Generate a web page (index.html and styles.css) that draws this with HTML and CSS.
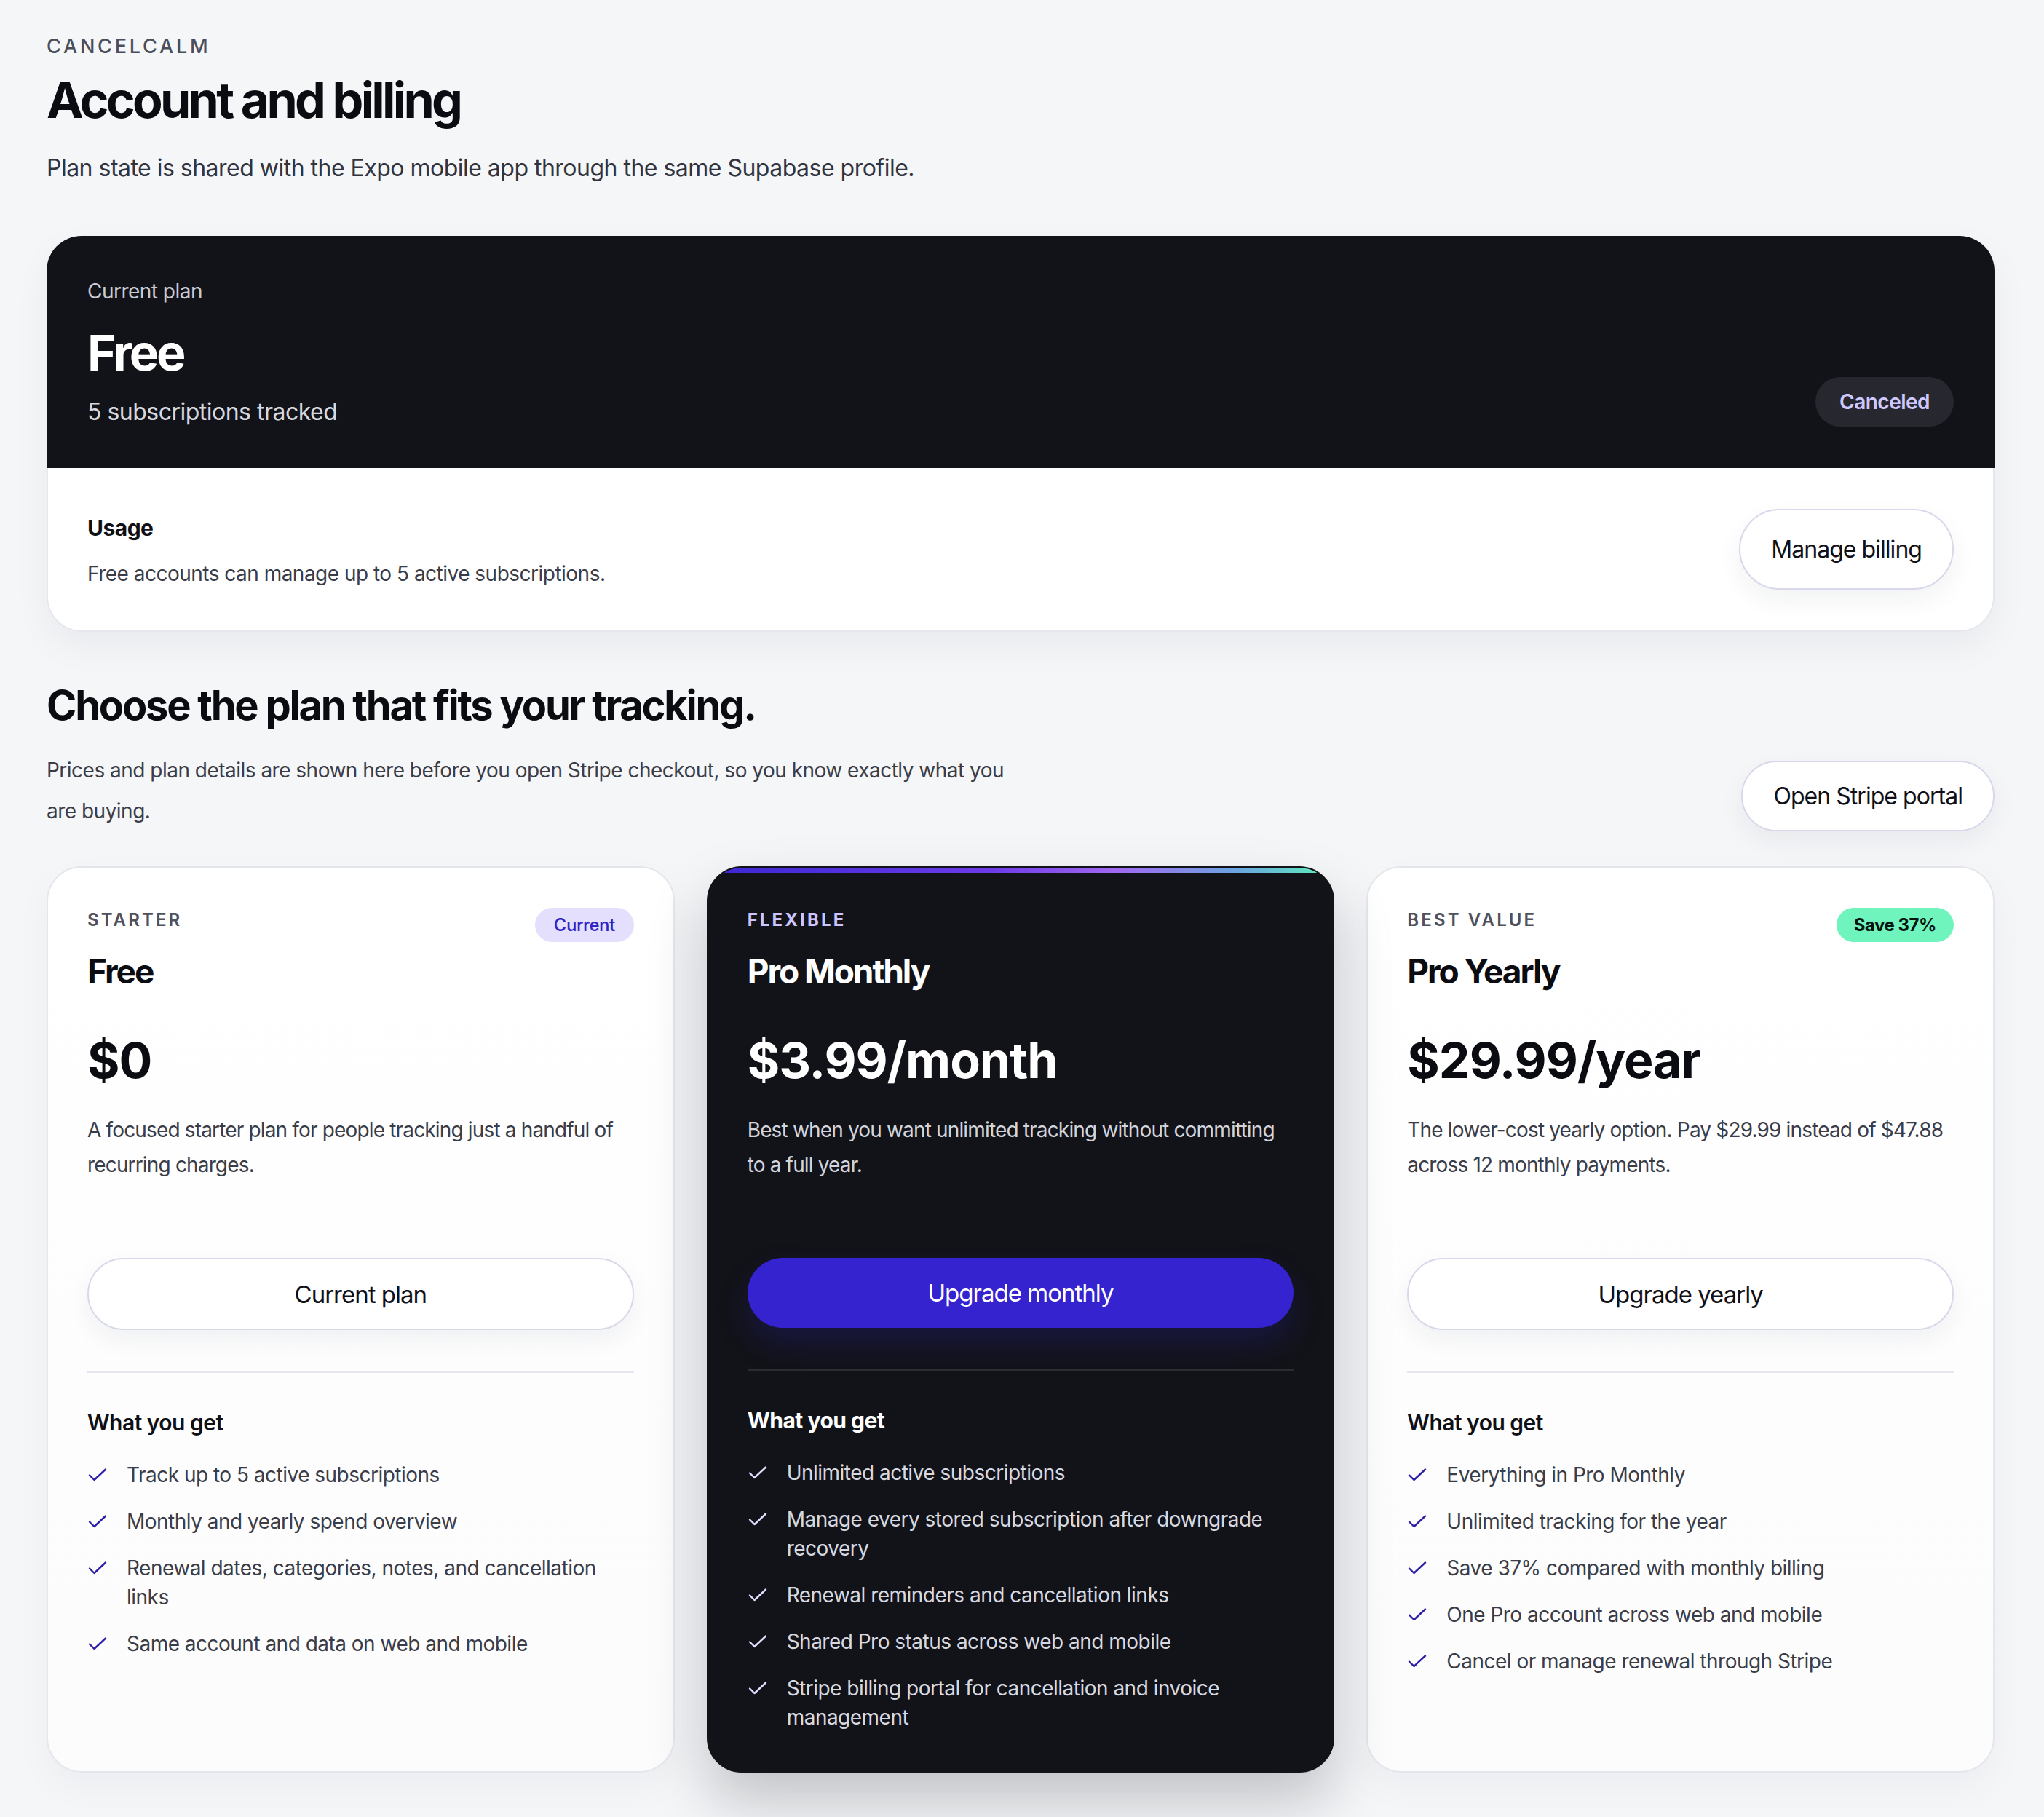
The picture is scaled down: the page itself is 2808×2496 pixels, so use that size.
FILE: index.html
```html
<!DOCTYPE html>
<html lang="en">
<head>
<meta charset="utf-8">
<title>Account and billing · CancelCalm</title>
<link rel="stylesheet" href="styles.css">
</head>
<body>
<main class="page">
  <header class="page-head">
    <p class="eyebrow">CANCELCALM</p>
    <h1 class="page-title">Account and billing</h1>
    <p class="lede">Plan state is shared with the Expo mobile app through the same Supabase profile.</p>
  </header>

  <section class="current">
    <div class="current-top">
      <div class="current-info">
        <p class="current-label">Current plan</p>
        <p class="current-name">Free</p>
        <p class="current-count">5 subscriptions tracked</p>
      </div>
      <span class="status-pill">Canceled</span>
    </div>
    <div class="usage">
      <div class="usage-text">
        <h3 class="usage-title">Usage</h3>
        <p class="usage-desc">Free accounts can manage up to 5 active subscriptions.</p>
      </div>
      <button class="btn btn-outline btn-manage">Manage billing</button>
    </div>
  </section>

  <section class="plans-head">
    <div class="plans-intro">
      <h2 class="plans-title">Choose the plan that fits your tracking.</h2>
      <p class="plans-desc">Prices and plan details are shown here before you open Stripe checkout, so you know exactly what you are buying.</p>
    </div>
    <button class="btn btn-outline btn-portal">Open Stripe portal</button>
  </section>

  <section class="plans">
    <article class="plan">
      <div class="plan-head">
        <span class="plan-eyebrow">STARTER</span>
        <span class="badge badge-current">Current</span>
      </div>
      <h3 class="plan-title">Free</h3>
      <p class="plan-price">$0</p>
      <p class="plan-desc">A focused starter plan for people tracking just a handful of recurring charges.</p>
      <button class="btn btn-outline btn-plan">Current plan</button>
      <hr class="divider">
      <h4 class="get-title">What you get</h4>
      <ul class="features">
        <li><svg class="check" viewBox="0 0 28 20" aria-hidden="true"><path d="M3 10.5 L9.5 17 L25 2.5"/></svg><span>Track up to 5 active subscriptions</span></li>
        <li><svg class="check" viewBox="0 0 28 20" aria-hidden="true"><path d="M3 10.5 L9.5 17 L25 2.5"/></svg><span>Monthly and yearly spend overview</span></li>
        <li><svg class="check" viewBox="0 0 28 20" aria-hidden="true"><path d="M3 10.5 L9.5 17 L25 2.5"/></svg><span>Renewal dates, categories, notes, and cancellation links</span></li>
        <li><svg class="check" viewBox="0 0 28 20" aria-hidden="true"><path d="M3 10.5 L9.5 17 L25 2.5"/></svg><span>Same account and data on web and mobile</span></li>
      </ul>
    </article>

    <article class="plan plan-dark">
      <div class="plan-head">
        <span class="plan-eyebrow">FLEXIBLE</span>
      </div>
      <h3 class="plan-title">Pro Monthly</h3>
      <p class="plan-price">$3.99/month</p>
      <p class="plan-desc">Best when you want unlimited tracking without committing to a full year.</p>
      <button class="btn btn-primary btn-plan">Upgrade monthly</button>
      <hr class="divider">
      <h4 class="get-title">What you get</h4>
      <ul class="features">
        <li><svg class="check" viewBox="0 0 28 20" aria-hidden="true"><path d="M3 10.5 L9.5 17 L25 2.5"/></svg><span>Unlimited active subscriptions</span></li>
        <li><svg class="check" viewBox="0 0 28 20" aria-hidden="true"><path d="M3 10.5 L9.5 17 L25 2.5"/></svg><span>Manage every stored subscription after downgrade recovery</span></li>
        <li><svg class="check" viewBox="0 0 28 20" aria-hidden="true"><path d="M3 10.5 L9.5 17 L25 2.5"/></svg><span>Renewal reminders and cancellation links</span></li>
        <li><svg class="check" viewBox="0 0 28 20" aria-hidden="true"><path d="M3 10.5 L9.5 17 L25 2.5"/></svg><span>Shared Pro status across web and mobile</span></li>
        <li><svg class="check" viewBox="0 0 28 20" aria-hidden="true"><path d="M3 10.5 L9.5 17 L25 2.5"/></svg><span>Stripe billing portal for cancellation and invoice management</span></li>
      </ul>
    </article>

    <article class="plan">
      <div class="plan-head">
        <span class="plan-eyebrow">BEST VALUE</span>
        <span class="badge badge-save">Save 37%</span>
      </div>
      <h3 class="plan-title">Pro Yearly</h3>
      <p class="plan-price">$29.99/year</p>
      <p class="plan-desc">The lower-cost yearly option. Pay $29.99 instead of $47.88 across 12 monthly payments.</p>
      <button class="btn btn-outline btn-plan">Upgrade yearly</button>
      <hr class="divider">
      <h4 class="get-title">What you get</h4>
      <ul class="features">
        <li><svg class="check" viewBox="0 0 28 20" aria-hidden="true"><path d="M3 10.5 L9.5 17 L25 2.5"/></svg><span>Everything in Pro Monthly</span></li>
        <li><svg class="check" viewBox="0 0 28 20" aria-hidden="true"><path d="M3 10.5 L9.5 17 L25 2.5"/></svg><span>Unlimited tracking for the year</span></li>
        <li><svg class="check" viewBox="0 0 28 20" aria-hidden="true"><path d="M3 10.5 L9.5 17 L25 2.5"/></svg><span>Save 37% compared with monthly billing</span></li>
        <li><svg class="check" viewBox="0 0 28 20" aria-hidden="true"><path d="M3 10.5 L9.5 17 L25 2.5"/></svg><span>One Pro account across web and mobile</span></li>
        <li><svg class="check" viewBox="0 0 28 20" aria-hidden="true"><path d="M3 10.5 L9.5 17 L25 2.5"/></svg><span>Cancel or manage renewal through Stripe</span></li>
      </ul>
    </article>
  </section>
</main>
</body>
</html>
```

FILE: styles.css
```css
* { box-sizing: border-box; }

html, body {
  margin: 0;
  padding: 0;
}

body {
  background: #f5f6f8;
  color: #0f1016;
  font-family: Inter, "Noto Sans", "Liberation Sans", sans-serif;
  letter-spacing: -0.032em;
}

p, h1, h2, h3, h4, ul { margin: 0; padding: 0; }

.page {
  padding: 48px 68px 64px 64px;
}

/* ---------- page head ---------- */
.eyebrow {
  font-size: 27px;
  line-height: 32px;
  font-weight: 500;
  letter-spacing: 0.14em;
  color: #4b4e58;
}

.page-title {
  margin-top: 17px;
  font-size: 68px;
  line-height: 80px;
  font-weight: 700;
  letter-spacing: -0.055em;
  color: #0b0c11;
}

.lede {
  margin-top: 32px;
  font-size: 32px;
  line-height: 44px;
  color: #31343e;
}

/* ---------- current plan panel ---------- */
.current {
  margin-top: 71px;
  border-radius: 48px;
  box-shadow: 0 20px 50px rgba(20, 22, 40, 0.05);
}

.current-top {
  background: #121318;
  border-radius: 48px 48px 0 0;
  padding: 58px 56px 55px 56px;
  display: flex;
  justify-content: space-between;
  align-items: flex-end;
}

.current-label {
  font-size: 28px;
  line-height: 36px;
  color: #c9cad3;
}

.current-name {
  margin-top: 26px;
  font-size: 68px;
  line-height: 80px;
  font-weight: 700;
  letter-spacing: -0.05em;
  color: #ffffff;
}

.current-count {
  margin-top: 20px;
  font-size: 32px;
  line-height: 44px;
  color: #d7d8df;
}

.status-pill {
  height: 68px;
  padding: 0 33px;
  border-radius: 999px;
  background: #27282f;
  color: #cec8ff;
  font-size: 28px;
  font-weight: 600;
  display: flex;
  align-items: center;
  margin-bottom: 2px;
}

.usage {
  background: #ffffff;
  border: 2px solid #e6e7ed;
  border-top: 0;
  border-radius: 0 0 48px 48px;
  padding: 56px 54px 56px 54px;
  display: flex;
  justify-content: space-between;
  align-items: center;
}

.usage-title {
  font-size: 30px;
  line-height: 48px;
  font-weight: 700;
  color: #0f1016;
}

.usage-desc {
  margin-top: 19px;
  font-size: 28px;
  line-height: 40px;
  color: #3a3d48;
}

/* ---------- buttons ---------- */
.btn {
  font-family: inherit;
  letter-spacing: -0.03em;
  cursor: pointer;
  border-radius: 999px;
  display: flex;
  align-items: center;
  justify-content: center;
}

.btn-outline {
  background: #ffffff;
  border: 2px solid #d9d7ea;
  color: #101118;
  box-shadow: 0 14px 34px rgba(24, 26, 50, 0.06);
}

.btn-primary {
  background: #3423cf;
  border: 0;
  color: #ffffff;
  box-shadow: 0 22px 44px rgba(52, 35, 207, 0.22);
}

.btn-manage {
  height: 111px;
  padding: 0 42px;
  font-size: 32px;
}

.btn-portal {
  height: 97px;
  padding: 0 42px;
  font-size: 32px;
  flex-shrink: 0;
}

/* ---------- plans head ---------- */
.plans-head {
  margin-top: 67px;
  display: flex;
  justify-content: space-between;
  align-items: flex-end;
}

.plans-title {
  font-size: 56px;
  line-height: 68px;
  font-weight: 700;
  letter-spacing: -0.04em;
  color: #0b0c11;
}

.plans-desc {
  margin-top: 27px;
  max-width: 1340px;
  font-size: 28px;
  line-height: 56px;
  color: #3a3d48;
}

/* ---------- plan cards ---------- */
.plans {
  margin-top: 48px;
  display: grid;
  grid-template-columns: repeat(3, 1fr);
  gap: 44px;
}

.plan {
  background: linear-gradient(180deg, #ffffff 0%, #fcfcfd 100%);
  border: 2px solid #e5e6ec;
  border-radius: 48px;
  padding: 54px;
  display: flex;
  flex-direction: column;
  box-shadow: 0 20px 50px rgba(20, 22, 40, 0.04);
}

.plan-dark {
  position: relative;
  overflow: hidden;
  background: #121318;
  border-color: #121318;
  color: #ffffff;
  box-shadow: 0 40px 80px rgba(14, 15, 28, 0.22);
}

.plan-dark::before {
  content: "";
  position: absolute;
  left: 0;
  right: 0;
  top: 0;
  height: 7px;
  background: linear-gradient(90deg, #3b27d4 0%, #6c3be8 45%, #a268f0 65%, #6aa7e0 85%, #5ef0b8 100%);
}

.plan-head {
  min-height: 48px;
  display: flex;
  justify-content: space-between;
  align-items: flex-start;
}

.plan-eyebrow {
  font-size: 24px;
  line-height: 36px;
  font-weight: 600;
  letter-spacing: 0.13em;
  color: #4f525c;
}

.plan-dark .plan-eyebrow {
  font-weight: 700;
  color: #cbc4ff;
}

.badge {
  height: 47px;
  padding: 0 26px;
  border-radius: 999px;
  font-size: 24px;
  letter-spacing: -0.02em;
  display: flex;
  align-items: center;
  margin-top: 1px;
}

.badge-current {
  background: #e4dffd;
  color: #3224c4;
  font-weight: 500;
}

.badge-save {
  padding: 0 24px;
  background: #6ff4be;
  color: #07150f;
  font-weight: 700;
}

.plan-title {
  margin-top: 12px;
  font-size: 46px;
  line-height: 56px;
  font-weight: 700;
  letter-spacing: -0.045em;
  color: #0b0c11;
}

.plan-dark .plan-title { color: #ffffff; }

.plan-price {
  margin-top: 54px;
  font-size: 68px;
  line-height: 80px;
  font-weight: 700;
  letter-spacing: -0.015em;
  color: #0b0c11;
}

.plan-dark .plan-price { color: #ffffff; }

.plan-desc {
  margin-top: 32px;
  font-size: 28px;
  line-height: 48px;
  letter-spacing: -0.03em;
  color: #3a3d48;
}

.plan-dark .plan-desc { color: #d3d4dc; }

.btn-plan {
  margin-top: 104px;
  height: 99px;
  width: 100%;
  font-size: 33px;
}

.plan-dark .btn-plan {
  height: 96px;
}

.divider {
  margin: 57px 0 0 0;
  border: 0;
  height: 2px;
  background: #e6e7ee;
}

.plan-dark .divider { background: #2a2b33; }

.get-title {
  margin-top: 48px;
  font-size: 30px;
  line-height: 40px;
  font-weight: 600;
  color: #0f1016;
}

.plan-dark .get-title { color: #ffffff; font-weight: 700; }

.features {
  margin-top: 32px;
  list-style: none;
  display: flex;
  flex-direction: column;
  gap: 24px;
}

.features li {
  display: flex;
  align-items: flex-start;
  gap: 26px;
  font-size: 28px;
  line-height: 40px;
  color: #3a3d48;
}

.plan-dark .features li { color: #d8d9e0; }

.check {
  flex-shrink: 0;
  width: 28px;
  height: 20px;
  margin-top: 10px;
  fill: none;
  stroke: #2a1fa6;
  stroke-width: 2.4;
  stroke-linecap: round;
  stroke-linejoin: round;
}

.plan-dark .check { stroke: #e2deff; }
```
